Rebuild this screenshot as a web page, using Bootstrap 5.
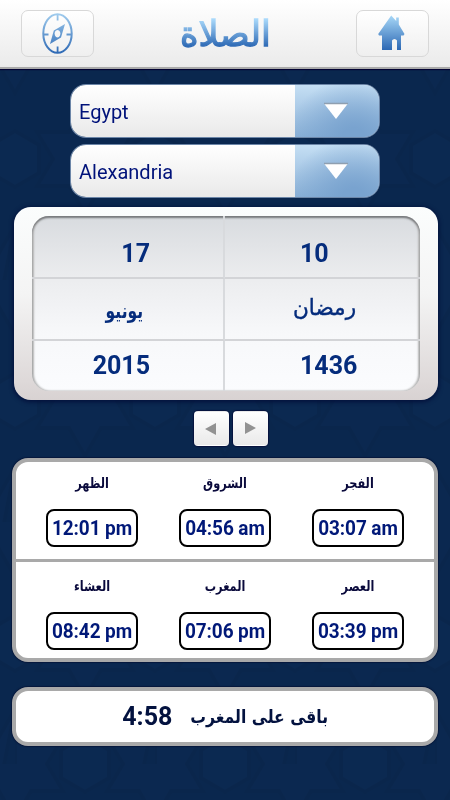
<!DOCTYPE html>
<html lang="ar">
<head>
<meta charset="utf-8">
<meta name="viewport" content="width=device-width, initial-scale=1">
<title>الصلاة</title>
<link href="https://cdn.jsdelivr.net/npm/bootstrap@5.3.0/dist/css/bootstrap.min.css" rel="stylesheet">
<style>
html,body{height:100%}
body{background:#0a284f;font-family:Roboto,"DejaVu Sans",sans-serif;color:#052c7c;overflow:hidden}
.backdrop{z-index:-1;width:450px;height:800px}
.topbar{height:69px;padding:0 21px;background:linear-gradient(#fff,#ebebeb 65px,#e8e8e8);border-bottom:2px solid #a9a9a9;box-shadow:0 1px 1px #000030}
.tool-btn{width:73px;height:47px;border:1px solid #d8d8d8;border-radius:7px;background:linear-gradient(#fff,#efefef);padding:0;margin-top:-1px}
.page-title{font:400 33px/40px "DejaVu Sans",sans-serif;background:linear-gradient(#a9d9fb 15%,#2c68b4 80%);-webkit-background-clip:text;background-clip:text;color:transparent;-webkit-text-stroke:1.2px transparent;transform:scale(1.07,1.06)}
.pickers{padding:16px 71px 0 71px;gap:8px}
.picker{height:52px;border-radius:15px;overflow:hidden;background:linear-gradient(#fff,#e9e9e9);box-shadow:0 0 0 1px #6c86a8;font-size:20px;color:#00127a}
.picker-text{padding-left:8px;padding-top:1px}
.picker-arrow{width:84px;padding-right:3px;background:radial-gradient(ellipse at 70% 105%,#79a3cf 15%,rgba(121,163,207,0) 80%),linear-gradient(#c5dff4,#8bb1d7)}
.date-frame{margin:10px 12px 0 14px;height:193px;padding:9px 18px;border-radius:17px;background:linear-gradient(#fbfdfd,#f4f4f4 45%,#ded9d9 90%,#d8d2d2);box-shadow:0 1px 4px 1px #03103b}
.date-grid{display:grid;grid-template-columns:193px 1fr;grid-template-rows:63px 62px 1fr;height:175px;border-radius:17px;overflow:hidden;background:linear-gradient(#d8dbdf,#ebecee 34%,#f7f8fa 67%,#fbfcfe);box-shadow:inset 0 2px 2px #77797c,inset 2px 0 2px #bbb,inset -2px 0 2px #bbb;font-size:25px;line-height:30px;font-weight:700}
.date-grid>div{border-bottom:2px solid #d3d4d7}
.date-grid>div:nth-child(odd){border-right:2px solid #d8dadd;text-align:right;padding-right:73px}
.date-grid>div:nth-child(even){padding-left:75px}
.date-grid>div:nth-child(n+5){border-bottom:0}
.r1{padding-top:23px}.r3{padding-top:10px}
.squeeze{display:inline-block;transform-origin:50% 60%}
.date-grid>.month-g{font:700 21px/30px "DejaVu Sans",sans-serif;padding-top:17px}
.month-g .squeeze{transform:scaleX(.74)}
.date-grid>div.month-h:nth-child(even){font:400 22px/30px "DejaVu Sans",sans-serif;padding-left:68px;padding-top:14px}
.month-h .squeeze{-webkit-text-stroke:.4px;transform:scaleX(.98);transform-origin:0 0}
.arrows{margin-top:11px;gap:4px;padding-left:11px}
.arrow-btn{width:35px;height:35px;padding:0;border-radius:4px;background:linear-gradient(#fff,#e9e9e9);box-shadow:0 0 1px 1px #06123e}
.times{margin:12px 12px 0;height:204px;border:4px solid #a9a9a9;border-radius:16px;background:#fff;box-shadow:0 0 1px 1px #06183c;overflow:hidden}
.times-row{display:grid;grid-template-columns:repeat(3,94px);column-gap:39px;padding-left:30px;height:97px}
.times-row+.times-row{border-top:3px solid #a9a9a9;height:99px}
.times-name{font:700 14px/20px "DejaVu Sans",sans-serif;color:#0a0a3c;padding-top:11px;margin-bottom:16px;margin-left:-2px;transform:scaleX(.81)}
.times-row+.times-row .times-name{padding-top:14px}
.times-value{width:92px;height:38px;border:2px solid #000;border-radius:8px;font-weight:700;font-size:19px;letter-spacing:-.1px;padding-top:2px;color:#001878;white-space:nowrap}
.times-value span{transform:scaleY(1.04)}
.remaining{margin:25px 12px 0;height:59px;border:4px solid #a9a9a9;border-radius:16px;background:#fff;box-shadow:0 0 1px 1px #06183c;gap:8px;color:#03123f;padding:1px 0 0 11px}
.remaining-time{font-size:25px;font-weight:700}
.remaining-text{font:700 18px/24px "DejaVu Sans",sans-serif;transform:scaleX(.87)}
</style>
<script src="https://cdn.jsdelivr.net/npm/bootstrap@5.3.0/dist/js/bootstrap.bundle.min.js"></script>
</head>
<body>
<svg class="backdrop position-fixed top-0 start-0" viewBox="0 0 450 800" aria-hidden="true">
  <defs>
    <pattern id="stars" width="140" height="242" patternUnits="userSpaceOnUse" x="15" y="38">
      <rect width="140" height="242" fill="#0a274e"/>
      <g fill="#0b2850" stroke="#0a264c" stroke-width="4">
        <path d="M70 66 86 94H118L102 121 118 148H86L70 176 54 148H22L38 121 22 94H54Z"/>
        <path d="M0-55 16-27H48L32 0 48 27H16L0 55-16 27H-48L-32 0-48-27H-16ZM140-55 156-27H188L172 0 188 27H156L140 55 124 27H92L108 0 92-27H124ZM0 187 16 215H48L32 242 48 269H16L0 297ZM140 187 124 215H92L108 242 92 269H124Z"/>
        <path d="M0 93 24 107V135L0 149-24 135V107ZM140 93 164 107V135L140 149 116 135V107ZM70-28 94-14V14L70 28 46 14V-14ZM70 214 94 228V256L70 270 46 256V228Z" fill="#0b2951"/>
      </g>
    </pattern>
  </defs>
  <rect width="450" height="800" fill="url(#stars)"/>
</svg>
<header class="topbar d-flex justify-content-between align-items-center">
  <button class="btn tool-btn d-flex align-items-center justify-content-center" aria-label="compass">
    <svg width="32" height="42" viewBox="0 0 32 42"><defs><linearGradient id="g1" x1="0" y1="0" x2="0" y2="42" gradientUnits="userSpaceOnUse"><stop offset="0" stop-color="#a5d0f0"/><stop offset="1" stop-color="#2c68b4"/></linearGradient><linearGradient id="g2" x1="0" y1="0" x2="0" y2="35" gradientUnits="userSpaceOnUse"><stop offset="0" stop-color="#a9d9f8"/><stop offset="1" stop-color="#2c68b4"/></linearGradient></defs>
    <ellipse cx="15.500" cy="21.500" rx="14.200" ry="19.300" fill="none" stroke="url(#g1)" stroke-width="2"/>
    <path d="M14.700 2.500h1.800v6h-1.800zM14.700 34.500h1.800v6h-1.800zM1.500 21.500h5v2h-5zM24.500 21.500h5v2h-5z" fill="url(#g1)"/>
    <path fill-rule="evenodd" d="M23 12 19 25.500 8 32 11.800 18.500ZM15.500 18a2.900 3.700 0 1 0 .01 0Z" fill="url(#g1)"/></svg>
  </button>
  <h1 class="page-title m-0" dir="rtl">الصلاة</h1>
  <button class="btn tool-btn d-flex align-items-center justify-content-center" aria-label="home">
    <svg width="28" height="36" viewBox="0 0 28 36"><path d="M13.200 .5 18.200 6V2.500h2.600v7L26.500 19 25.500 20.500H23V35h-4V25.500a2.800 2.800 0 0 0-5 0V35H4V20.500H1L.2 19Z" fill="url(#g2)"/></svg>
  </button>
</header>
<main class="d-flex flex-column">
  <section class="pickers d-flex flex-column">
    <div class="picker d-flex" role="button"><span class="picker-text flex-grow-1 align-self-center">Egypt</span><span class="picker-arrow d-flex align-items-center justify-content-center"><svg width="26" height="20" viewBox="0 0 26 20"><path d="M1 2.500h24L13 18Z" fill="#fff"/><path d="M1 2.500h24" stroke="#8f9fb0" stroke-width="1.400"/></svg></span></div>
    <div class="picker d-flex" role="button"><span class="picker-text flex-grow-1 align-self-center">Alexandria</span><span class="picker-arrow d-flex align-items-center justify-content-center"><svg width="26" height="20" viewBox="0 0 26 20"><path d="M1 2.500h24L13 18Z" fill="#fff"/><path d="M1 2.500h24" stroke="#8f9fb0" stroke-width="1.400"/></svg></span></div>
  </section>
  <section class="date-frame">
    <div class="date-grid">
      <div class="r1">17</div><div class="r1">10</div>
      <div class="month-g"><bdi class="squeeze">يونيو</bdi></div><div class="month-h"><bdi class="squeeze">رمضان</bdi></div>
      <div class="r3">2015</div><div class="r3">1436</div>
    </div>
  </section>
  <div class="arrows d-flex justify-content-center">
    <button class="btn arrow-btn d-flex align-items-center justify-content-center" aria-label="previous"><svg width="12" height="14" viewBox="0 0 12 14"><path d="M0 7 11 1V13Z" fill="#929292"/></svg></button>
    <button class="btn arrow-btn d-flex align-items-center justify-content-center" aria-label="next"><svg width="12" height="14" viewBox="0 0 12 14"><path d="M12 6 1 0V12Z" fill="#929292"/></svg></button>
  </div>
  <section class="times">
    <div class="times-row">
      <div><div class="times-name text-center">الظهر</div><div class="times-value d-flex align-items-center justify-content-center"><span>12:01 pm</span></div></div>
      <div><div class="times-name text-center">الشروق</div><div class="times-value d-flex align-items-center justify-content-center"><span>04:56 am</span></div></div>
      <div><div class="times-name text-center">الفجر</div><div class="times-value d-flex align-items-center justify-content-center"><span>03:07 am</span></div></div>
    </div>
    <div class="times-row">
      <div><div class="times-name text-center">العشاء</div><div class="times-value d-flex align-items-center justify-content-center"><span>08:42 pm</span></div></div>
      <div><div class="times-name text-center">المغرب</div><div class="times-value d-flex align-items-center justify-content-center"><span>07:06 pm</span></div></div>
      <div><div class="times-name text-center">العصر</div><div class="times-value d-flex align-items-center justify-content-center"><span>03:39 pm</span></div></div>
    </div>
  </section>
  <section class="remaining d-flex align-items-center justify-content-center">
    <span class="remaining-time">4:58</span><span class="remaining-text" dir="rtl">باقى على المغرب</span>
  </section>
</main>
</body>
</html>
